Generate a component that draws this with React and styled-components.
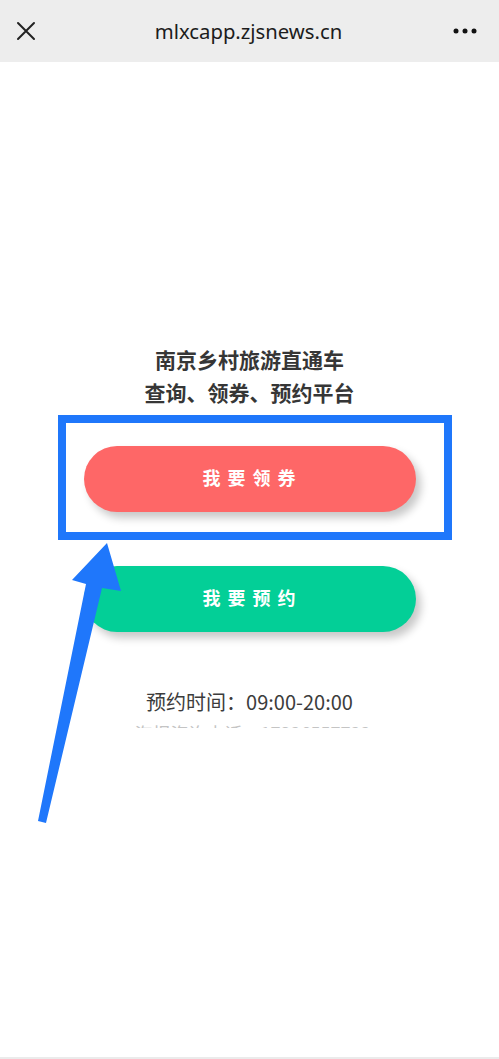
import React from 'react';
import styled, { createGlobalStyle } from 'styled-components';

const GlobalStyle = createGlobalStyle`
  html, body {
    margin: 0;
    padding: 0;
    background: #ffffff;
    font-family: "Noto Sans", "Noto Sans CJK SC", sans-serif;
  }
`;

const Page = styled.div`
  position: relative;
  width: 100%;
  height: 1059px;
  display: flex;
  flex-direction: column;
  background: #fff;
  overflow: hidden;
`;

const TopBar = styled.div`
  height: 62px;
  flex-shrink: 0;
  background: #ededed;
  display: flex;
  align-items: center;
  justify-content: space-between;
  padding: 0 22px 0 14px;
`;

const IconBtn = styled.div`
  width: 24px;
  height: 24px;
  display: flex;
  align-items: center;
  justify-content: center;
  color: #1e1e1e;
`;

const Url = styled.div`
  font-family: "Noto Sans", sans-serif;
  font-size: 20.3px;
  color: #1c1c1c;
  padding-left: 6px;
`;

const Main = styled.div`
  flex: 1;
  display: flex;
  flex-direction: column;
  align-items: center;
  padding-top: 281px;
`;

const Title = styled.div`
  font-family: "Noto Sans CJK SC", sans-serif;
  font-size: 21px;
  font-weight: 700;
  line-height: 33px;
  color: #363636;
  text-align: center;
`;

const PillButton = styled.button`
  width: 332px;
  height: 66px;
  border: none;
  border-radius: 33px;
  background: ${p => p.$bg};
  color: #fff;
  font-family: "Noto Sans CJK SC", sans-serif;
  font-size: 18px;
  font-weight: 700;
  line-height: 1;
  letter-spacing: 7px;
  padding: 0 0 4px 6px;
  margin-top: ${p => p.$top}px;
  box-shadow: 5px 6px 8px rgba(0, 0, 0, 0.22);
  cursor: pointer;
`;

const Hours = styled.div`
  margin-top: 56px;
  font-family: "Noto Sans CJK SC", sans-serif;
  font-size: 20px;
  line-height: 28px;
  color: #3c3c3c;
`;

const CutLine = styled.div`
  height: 7px;
  overflow: hidden;
  margin-top: 5px;
  font-family: "Noto Sans CJK SC", sans-serif;
  font-size: 18px;
  line-height: 24px;
  color: #c4c4c4;
  padding-left: 6px;
`;

const BottomEdge = styled.div`
  height: 2px;
  flex-shrink: 0;
  background: #ebebeb;
`;

const Highlight = styled.div`
  position: absolute;
  left: 58px;
  top: 415px;
  width: 394px;
  height: 125px;
  box-sizing: border-box;
  border: 8px solid #1f77fb;
  pointer-events: none;
`;

const Overlay = styled.svg`
  position: absolute;
  left: 0;
  top: 0;
  pointer-events: none;
`;

export default function App() {
  return (
    <>
      <GlobalStyle />
      <Page>
        <TopBar>
          <IconBtn>
            <svg width="22" height="22" viewBox="0 0 22 22">
              <path d="M3 3 L19 19 M19 3 L3 19" stroke="#222" strokeWidth="2" strokeLinecap="round" />
            </svg>
          </IconBtn>
          <Url>mlxcapp.zjsnews.cn</Url>
          <IconBtn>
            <svg width="24" height="8" viewBox="0 0 24 8">
              <circle cx="3" cy="4" r="2.5" fill="#111" />
              <circle cx="12" cy="4" r="2.5" fill="#111" />
              <circle cx="21" cy="4" r="2.5" fill="#111" />
            </svg>
          </IconBtn>
        </TopBar>
        <Main>
          <Title>
            南京乡村旅游直通车
            <br />
            查询、领券、预约平台
          </Title>
          <PillButton $bg="#fe6767" $top={37}>我要领券</PillButton>
          <PillButton $bg="#03cf97" $top={54}>我要预约</PillButton>
          <Hours>预约时间：09:00-20:00</Hours>
          <CutLine>海报咨询电话：17326557722</CutLine>
        </Main>
        <BottomEdge />
        <Highlight />
        <Overlay width="499" height="1059" viewBox="0 0 499 1059">
          <polygon
            points="107,543 121,591 102,588 46,823 38,821 86,584 72,580"
            fill="#1f77fb"
          />
        </Overlay>
      </Page>
    </>
  );
}
